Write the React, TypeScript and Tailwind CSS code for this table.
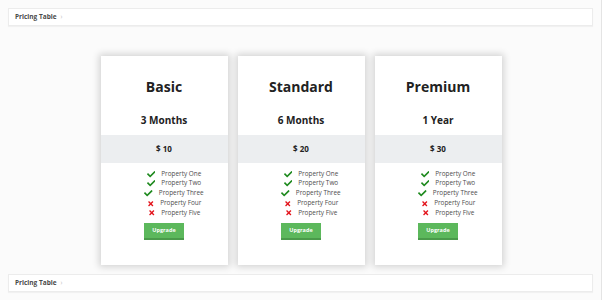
import React from "react";
import { FaCheck, FaTimes } from "react-icons/fa";

const plans = [
  { name: "Basic", period: "3 Months", price: "$ 10" },
  { name: "Standard", period: "6 Months", price: "$ 20" },
  { name: "Premium", period: "1 Year", price: "$ 30" },
];

const props = [
  { label: "Property One", ok: true },
  { label: "Property Two", ok: true },
  { label: "Property Three", ok: true },
  { label: "Property Four", ok: false },
  { label: "Property Five", ok: false },
];

function Bar() {
  return (
    <div className="mx-2 h-[18px] flex items-center bg-white border border-[#ececec] shadow-[0_1px_1px_rgba(0,0,0,0.04)] px-[6px]">
      <span className="text-[6.5px] font-bold text-[#4a4a4a] leading-none">Pricing Table</span>
      <span className="text-[6.5px] text-[#bbb] ml-[4px] leading-none">›</span>
    </div>
  );
}

function Card({ p }: { p: (typeof plans)[number] }) {
  return (
    <div className="w-[127px] h-[209px] bg-white shadow-[0_0_7px_2px_rgba(0,0,0,0.16)] flex flex-col items-stretch">
      <div className="h-[20px] mt-[21px] flex items-center justify-center text-[14px] font-bold text-[#222] leading-none">
        {p.name}
      </div>
      <div className="h-[14px] mt-[16px] flex items-center justify-center text-[10px] font-bold text-[#222] leading-none">
        {p.period}
      </div>
      <div className="h-[28px] mt-[8px] bg-[#eceef0] flex items-center justify-center text-[8px] font-bold text-[#222]">
        {p.price}
      </div>
      <ul className="mt-[6px] pl-[20px] flex flex-col items-center">
        {props.map((r) => (
          <li key={r.label} className="h-[9.8px] flex items-center gap-[6px] text-[6.4px] text-[#4d4d4d] leading-none">
            {r.ok ? (
              <FaCheck className="w-[8.5px] h-[8.5px] text-[#1f8a1f]" />
            ) : (
              <FaTimes className="w-[7.5px] h-[7.5px] text-[#e3141c]" />
            )}
            <span>{r.label}</span>
          </li>
        ))}
      </ul>
      <div className="flex justify-center mt-[5px]">
        <div className="w-[40px] h-[17px] bg-[#5cb85c] border-b-2 border-[#4a9a4a] flex items-center justify-center text-[5.5px] font-bold text-white">
          Upgrade
        </div>
      </div>
    </div>
  );
}

export default function App() {
  return (
    <div
      className="w-[602px] h-[300px] bg-[#fbfbfb] border-r border-[#e4e4e4] pt-[8px] overflow-hidden"
      style={{ fontFamily: '"Open Sans", "Noto Sans", sans-serif' }}
    >
      <Bar />
      <div className="flex justify-center gap-[10px] mt-[30px] mb-[9px] pl-[1px]">
        {plans.map((p) => (
          <Card key={p.name} p={p} />
        ))}
      </div>
      <Bar />
    </div>
  );
}
